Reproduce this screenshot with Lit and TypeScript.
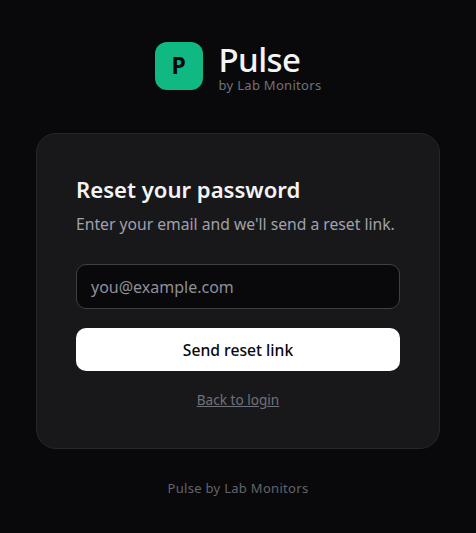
import { LitElement, html, css } from "lit";
import { customElement } from "lit/decorators.js";

@customElement("app-root")
export class AppRoot extends LitElement {
  static styles = css`
    :host {
      display: block;
      min-height: 533px;
      background: #09090b;
      font-family: "Noto Sans", "Open Sans", sans-serif;
      overflow: hidden;
    }
    .page {
      display: flex;
      flex-direction: column;
      align-items: center;
      padding: 42px 36px 0;
    }
    .brand {
      display: flex;
      align-items: center;
      gap: 16px;
      margin-bottom: 43px;
      height: 48px;
    }
    .logo {
      box-sizing: border-box;
      width: 48px;
      height: 48px;
      padding-bottom: 3px;
      border-radius: 12px;
      background: #10b981;
      color: #09090b;
      display: flex;
      align-items: center;
      justify-content: center;
      font-size: 23px;
      font-weight: 700;
    }
    .names {
      display: flex;
      flex-direction: column;
      padding-top: 2px;
    }
    .name {
      font-size: 33px;
      line-height: 36px;
      font-weight: 500;
      letter-spacing: -0.6px;
      color: #f4f4f5;
    }
    .by {
      font-size: 13px;
      line-height: 14px;
      letter-spacing: 0.3px;
      color: #71717a;
    }
    .card {
      box-sizing: border-box;
      width: 404px;
      height: 316px;
      background: #18181b;
      border: 1px solid #27272a;
      border-radius: 20px;
      padding: 40px 39px 39px;
      display: flex;
      flex-direction: column;
    }
    h1 {
      margin: 0 0 8px;
      font-size: 22.1px;
      line-height: 30px;
      font-weight: 600;
      color: #f4f4f5;
    }
    .sub {
      margin: 0 0 28px;
      font-size: 15.7px;
      line-height: 24px;
      color: #a1a1aa;
    }
    .input {
      box-sizing: border-box;
      height: 45px;
      border: 1px solid #3f3f46;
      border-radius: 10px;
      background: #09090b;
      padding: 0 14px;
      display: flex;
      align-items: center;
      font-size: 16px;
      color: #8f8f99;
      margin-bottom: 19px;
    }
    .btn {
      height: 43px;
      border-radius: 10px;
      background: #fff;
      color: #09090b;
      display: flex;
      align-items: center;
      justify-content: center;
      font-size: 15.7px;
      font-weight: 500;
      margin-bottom: 20px;
    }
    .back {
      align-self: center;
      font-size: 13.6px;
      line-height: 18px;
      color: #71717a;
      text-decoration: underline;
    }
    .foot {
      margin-top: 30px;
      font-size: 13px;
      line-height: 18px;
      letter-spacing: 0.3px;
      color: #63636c;
    }
  `;

  render() {
    return html`<div class="page">
      <div class="brand">
        <div class="logo">P</div>
        <div class="names">
          <div class="name">Pulse</div>
          <div class="by">by Lab Monitors</div>
        </div>
      </div>
      <div class="card">
        <h1>Reset your password</h1>
        <p class="sub">Enter your email and we'll send a reset link.</p>
        <div class="input">you@example.com</div>
        <div class="btn">Send reset link</div>
        <a class="back">Back to login</a>
      </div>
      <div class="foot">Pulse by Lab Monitors</div>
    </div>`;
  }
}
